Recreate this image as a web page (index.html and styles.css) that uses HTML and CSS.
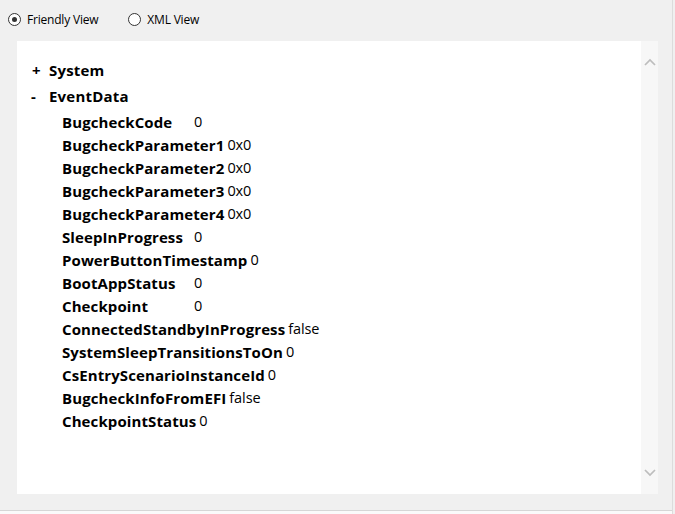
FILE: index.html
```html
<!DOCTYPE html>
<html>
<head>
<meta charset="utf-8">
<link rel="stylesheet" href="styles.css">
</head>
<body>
<div class="window">
  <div class="toolbar">
    <label class="radio"><span class="dot checked"></span>Friendly View</label>
    <label class="radio second"><span class="dot"></span>XML View</label>
  </div>
  <div class="panel">
    <div class="content">
      <div class="node"><span class="sign">+</span><span class="title">System</span></div>
      <div class="node open"><span class="sign minus">-</span><span class="title">EventData</span></div>
      <div class="rows">
        <div class="row"><span class="name">BugcheckCode</span><span class="val">0</span></div>
        <div class="row"><span class="name">BugcheckParameter1</span><span class="val">0x0</span></div>
        <div class="row"><span class="name">BugcheckParameter2</span><span class="val">0x0</span></div>
        <div class="row"><span class="name">BugcheckParameter3</span><span class="val">0x0</span></div>
        <div class="row"><span class="name">BugcheckParameter4</span><span class="val">0x0</span></div>
        <div class="row"><span class="name">SleepInProgress</span><span class="val">0</span></div>
        <div class="row"><span class="name">PowerButtonTimestamp</span><span class="val">0</span></div>
        <div class="row"><span class="name">BootAppStatus</span><span class="val">0</span></div>
        <div class="row"><span class="name">Checkpoint</span><span class="val">0</span></div>
        <div class="row"><span class="name">ConnectedStandbyInProgress</span><span class="val">false</span></div>
        <div class="row"><span class="name">SystemSleepTransitionsToOn</span><span class="val">0</span></div>
        <div class="row"><span class="name">CsEntryScenarioInstanceId</span><span class="val">0</span></div>
        <div class="row"><span class="name">BugcheckInfoFromEFI</span><span class="val">false</span></div>
        <div class="row"><span class="name">CheckpointStatus</span><span class="val">0</span></div>
      </div>
    </div>
    <div class="scrollbar">
      <svg class="arrow" width="12" height="8" viewBox="0 0 12 8"><path d="M1 7 L6 2 L11 7" fill="none" stroke="#bdbdbd" stroke-width="1.7"/></svg>
      <svg class="arrow" width="12" height="8" viewBox="0 0 12 8"><path d="M1 1 L6 6 L11 1" fill="none" stroke="#bdbdbd" stroke-width="1.7"/></svg>
    </div>
  </div>
  <div class="bottom"></div>
</div>
</body>
</html>
```
FILE: styles.css
```css
html, body {
  margin: 0;
  padding: 0;
  background: #f0f0f0;
}
body {
  width: 675px;
  height: 514px;
  overflow: hidden;
  font-family: "Open Sans", "Noto Sans", sans-serif;
  color: #000;
}
.window {
  width: 672px;
  height: 514px;
  border-right: 1px solid #dcdcdc;
  display: flex;
  flex-direction: column;
}
.toolbar {
  height: 41px;
  display: flex;
  align-items: flex-start;
  padding-top: 12px;
  box-sizing: border-box;
  padding-left: 8px;
  font-size: 12px;
}
.radio {
  display: flex;
  align-items: center;
  gap: 6px;
  height: 15px;
  letter-spacing: -0.2px;
}
.radio.second {
  margin-left: 30px;
}
.dot {
  width: 11px;
  height: 11px;
  border: 1px solid #333;
  border-radius: 50%;
  background: #fff;
  box-sizing: content-box;
  position: relative;
}
.dot.checked::after {
  content: "";
  position: absolute;
  left: 3px;
  top: 3px;
  width: 5px;
  height: 5px;
  border-radius: 50%;
  background: #333;
}
.panel {
  margin-left: 17px;
  width: 641px;
  height: 453px;
  background: #fff;
  display: flex;
}
.content {
  flex: 1;
  padding-top: 16px;
  padding-left: 13px;
}
.node {
  display: flex;
  height: 26px;
  align-items: center;
  font-size: 15px;
  font-weight: 700;
}
.title {
  letter-spacing: 0.2px;
}
.sign {
  width: 17px;
  padding-left: 2px;
}
.sign.minus {
  padding-left: 1px;
  width: 18px;
}
.rows {
  padding-left: 32px;
  padding-top: 1px;
}
.row {
  display: flex;
  height: 23px;
  align-items: center;
}
.name {
  font-size: 15px;
  font-weight: 700;
  min-width: 129px;
  padding-right: 3px;
  letter-spacing: 0.1px;
}
.val {
  font-size: 14.5px;
  font-weight: 400;
  letter-spacing: -0.1px;
}
.scrollbar {
  width: 17px;
  background: #f7f7f7;
  display: flex;
  flex-direction: column;
  justify-content: space-between;
  align-items: center;
  padding: 17px 0 17px;
}
.arrow {
  display: block;
}
.bottom {
  margin-top: auto;
  height: 3px;
  border-top: 1px solid #d6d6d6;
  background: #fafafa;
}
```
